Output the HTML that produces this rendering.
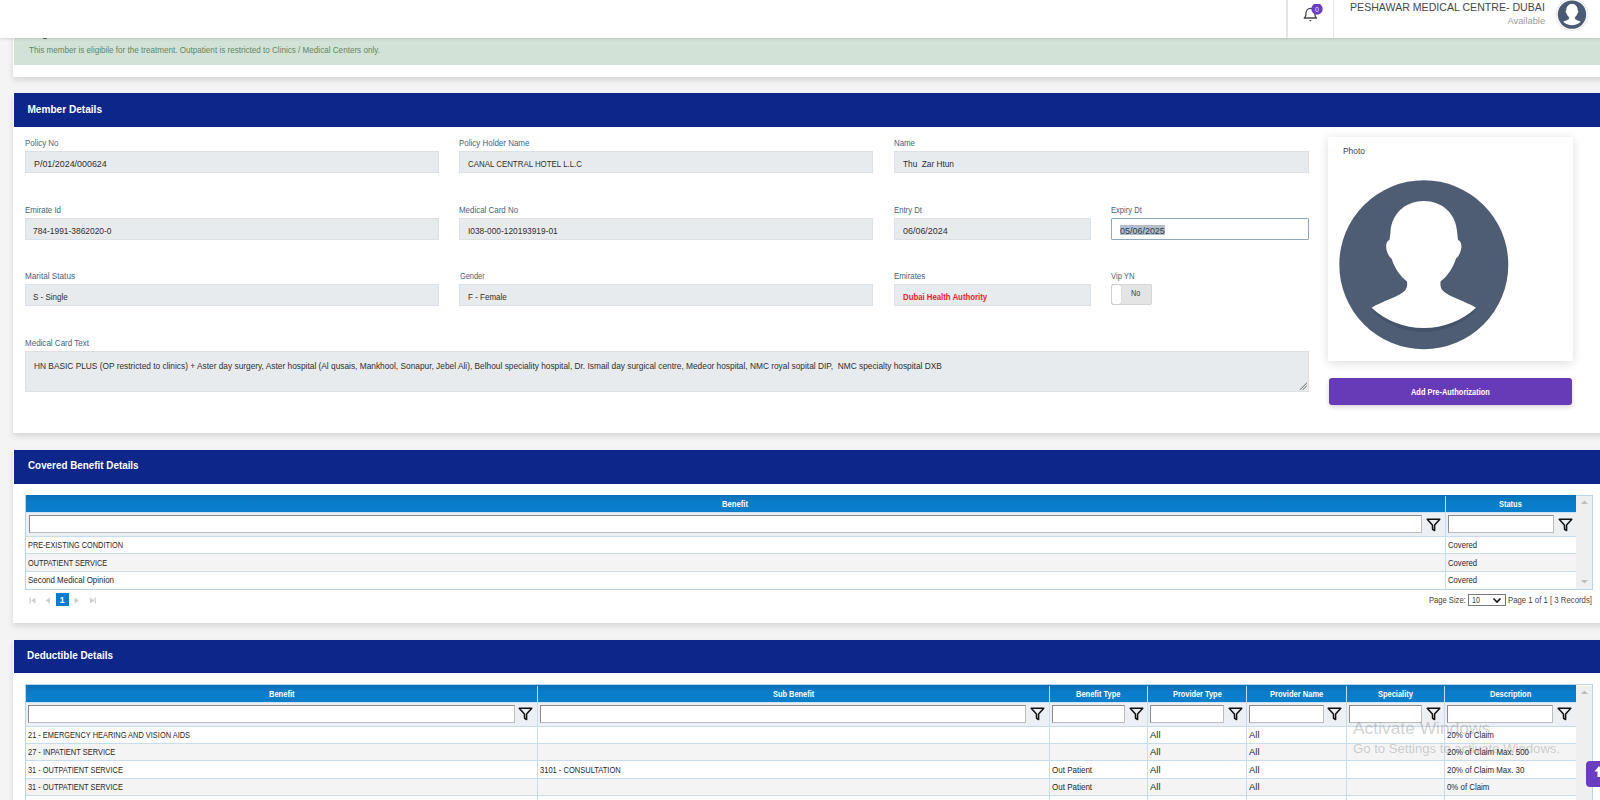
<!DOCTYPE html>
<html><head><meta charset="utf-8">
<style>
*{box-sizing:border-box;margin:0;padding:0}
html,body{width:1600px;height:800px;overflow:hidden}
body{position:relative;background:#f4f4f5;font-family:"Liberation Sans",sans-serif;color:#333}
.a{position:absolute}
.t{position:absolute;white-space:nowrap;line-height:1;transform-origin:0 0}
.card{position:absolute;left:13px;width:1600px;background:#fff;box-shadow:0 3px 6px rgba(0,0,0,0.13)}
.bh{position:absolute;left:14px;width:1600px;background:#0d2689}
.inp{position:absolute;background:#e8ebee;border:1px solid #dde0e4}
.grid{position:absolute;left:25px;width:1568px;border:1px solid #b9d3ea;background:#fff}
.gh{position:absolute;background:linear-gradient(#0a70b8,#0a7cc8 40%,#0a80cd)}
.fr{position:absolute;background:#eceff3}
.fin{position:absolute;background:#fff;border:1px solid #8a8a8a;border-bottom-color:#bdbdbd;border-right-color:#bdbdbd}
.vl{position:absolute;width:1px;background:#c6dcf0}
.hl{position:absolute;height:1px;background:#c6dcf0}
.stripe{position:absolute;background:#f4f4f4}
</style></head><body>

<div class="card" style="top:0;height:76.5px"></div>
<div class="a" style="left:14px;top:0;width:1600px;height:65px;background:#d3e2d6"></div>
<div class="a" style="left:42.5px;top:37.5px;width:4.5px;height:1.5px;background:#5a665c;border-radius:1px"></div>
<div class="a" style="left:0;top:0;width:1600px;height:38px;background:#fff;box-shadow:0 1px 3px rgba(0,0,0,0.12)"></div>
<div class="a" style="left:1286px;top:0;width:1.5px;height:38px;background:#e6e6e6"></div>
<div class="a" style="left:1333px;top:0;width:1px;height:38px;background:#e6e6e6"></div>
<svg class="a" style="left:1300px;top:4px" width="24" height="22" viewBox="0 0 24 22">
  <path d="M4.2 14 C5.4 13.2 5.9 12.2 5.9 10.4 C5.9 7 7.6 4.3 10.4 4.3 C13.2 4.3 14.9 7 14.9 10.4 C14.9 12.2 15.4 13.2 16.6 14 Z" fill="none" stroke="#474747" stroke-width="1.3" stroke-linejoin="round"/>
  <path d="M8.9 16.1 L11.9 16.1 L10.4 17.6 Z" fill="#4a4a4a"/>
  <circle cx="17" cy="5" r="5.7" fill="#6a3ec0"/>
  <text x="17" y="7.5" font-size="7" fill="#e8e0ff" text-anchor="middle" font-family="Liberation Sans">0</text>
</svg>
<svg class="a" style="left:1555px;top:-2px" width="34" height="34" viewBox="0 0 34 34">
  <circle cx="17" cy="16.6" r="16" fill="#fff" stroke="#e4e6ea" stroke-width="1"/>
  <circle cx="17" cy="16.6" r="14.2" fill="#4b5b76"/>
  <g transform="translate(17 16.6) scale(0.168) translate(-93.8 -94.7)"><path d="M93.8 30.9 C76 30.9 61.5 43 60.5 62 C60 66 59.8 68.5 59.5 70 C56.5 71 55.5 75 56.5 79.5 C57.5 84 59.5 87 61.5 88.5 C64.5 98 70 106 77 111.5 C77.5 115 77 118 75 120.5 C69 127 52 131 41.6 137.8 C56 151 74 158 93.8 158 C113.6 158 131.6 151 146 137.8 C135.6 131 118.6 127 112.6 120.5 C110.6 118 110.1 115 110.6 111.5 C117.6 106 123 98 126 88.5 C128 87 130 84 131 79.5 C132 75 131 71 128 70 C127.8 68.5 127.6 66 127.1 62 C126.1 43 111.6 30.9 93.8 30.9 Z" fill="#fff"/></g>
</svg>
<div class="card" style="top:93px;height:340px"></div>
<div class="bh" style="top:93px;height:33.6px"></div>
<div class="inp" style="left:25px;top:151px;width:414px;height:22px"></div>
<div class="inp" style="left:459px;top:151px;width:414px;height:22px"></div>
<div class="inp" style="left:25px;top:218px;width:414px;height:22px"></div>
<div class="inp" style="left:459px;top:218px;width:414px;height:22px"></div>
<div class="inp" style="left:25px;top:284px;width:414px;height:22px"></div>
<div class="inp" style="left:459px;top:284px;width:414px;height:22px"></div>
<div class="inp" style="left:894px;top:151px;width:414.5px;height:22px"></div>
<div class="inp" style="left:894px;top:218px;width:197px;height:22px"></div>
<div class="inp" style="left:894px;top:284px;width:197px;height:22px"></div>
<div class="a" style="left:1111px;top:218px;width:198px;height:22px;background:#fff;border:1.3px solid #8fa9c4;border-radius:1px"></div>
<div class="a" style="left:1120px;top:225px;width:45px;height:9.7px;background:#b3bfcb"></div>
<div class="a" style="left:1111px;top:284px;width:41px;height:20.5px;background:#e4e4e4;border:1px solid #d6d6d6;border-radius:2px"></div>
<div class="a" style="left:1111.5px;top:284.5px;width:9px;height:19.5px;background:#fff;border-radius:2px;box-shadow:0 0 1px rgba(0,0,0,0.3)"></div>
<div class="inp" style="left:25px;top:351px;width:1284px;height:40.6px"></div>
<svg class="a" style="left:1299px;top:382px" width="9" height="9" viewBox="0 0 9 9"><path d="M7.8 1 L0.8 7.8 M7.8 3.8 L3.6 7.8" stroke="#555" stroke-width="0.9"/></svg>
<div class="a" style="left:1328px;top:137px;width:245px;height:224px;background:#fff;box-shadow:0 2px 10px rgba(0,0,0,0.14)"></div>
<svg class="a" style="left:1330px;top:170px" width="190" height="190" viewBox="0 0 190 190">
  <circle cx="93.8" cy="94.7" r="84.5" fill="#4e5d74"/>
  <path d="M41.6 140.8 C56 154 74 162 93.8 162 C113.6 162 131.6 154 146 140.8 L146 137.8 C131.6 151 113.6 158 93.8 158 C74 158 56 151 41.6 137.8 Z" fill="#44526a"/>
  <path d="M93.8 30.9 C76 30.9 61.5 43 60.5 62 C60 66 59.8 68.5 59.5 70 C56.5 71 55.5 75 56.5 79.5 C57.5 84 59.5 87 61.5 88.5 C64.5 98 70 106 77 111.5 C77.5 115 77 118 75 120.5 C69 127 52 131 41.6 137.8 C56 151 74 158 93.8 158 C113.6 158 131.6 151 146 137.8 C135.6 131 118.6 127 112.6 120.5 C110.6 118 110.1 115 110.6 111.5 C117.6 106 123 98 126 88.5 C128 87 130 84 131 79.5 C132 75 131 71 128 70 C127.8 68.5 127.6 66 127.1 62 C126.1 43 111.6 30.9 93.8 30.9 Z" fill="#fff"/>
</svg>
<div class="a" style="left:1329px;top:378px;width:243px;height:27px;background:#673ab7;border-radius:3px;box-shadow:0 2px 5px rgba(0,0,0,0.18)"></div>
<div class="card" style="top:450px;height:173px"></div>
<div class="bh" style="top:450px;height:34px"></div>
<div class="grid" style="top:495px;height:94.5px"></div>
<div class="gh" style="left:26px;top:495.2px;width:1550px;height:16.8px"></div>
<div class="fr" style="left:26px;top:512px;width:1550px;height:24px;border-top:1px solid #cde2f4"></div>
<div class="fin" style="left:29px;top:515.3px;width:1392.5px;height:18px"></div>
<div class="fin" style="left:1448px;top:515.3px;width:105.5px;height:18px"></div>
<svg class="a" style="left:1426.0px;top:517.5px" width="15" height="14" viewBox="0 0 15 14"><path d="M1.2 1.2 L13.8 1.2 L8.6 7 L8.6 12.6 L6.6 11.4 L6.4 7 Z" fill="none" stroke="#111" stroke-width="1.5" stroke-linejoin="round"/></svg>
<svg class="a" style="left:1557.5px;top:517.5px" width="15" height="14" viewBox="0 0 15 14"><path d="M1.2 1.2 L13.8 1.2 L8.6 7 L8.6 12.6 L6.6 11.4 L6.4 7 Z" fill="none" stroke="#111" stroke-width="1.5" stroke-linejoin="round"/></svg>
<div class="stripe" style="left:26px;top:554px;width:1550px;height:17px"></div>
<div class="hl" style="left:26px;top:535.6px;width:1550px"></div>
<div class="hl" style="left:26px;top:553.4px;width:1550px"></div>
<div class="hl" style="left:26px;top:570.8px;width:1550px"></div>
<div class="vl" style="left:1444.5px;top:496px;height:93px"></div>
<div class="a" style="left:1576px;top:496px;width:16px;height:93px;background:#efefef"></div>
<svg class="a" style="left:1580px;top:499px" width="9" height="6" viewBox="0 0 9 6"><path d="M1 5 L4.5 1.5 L8 5 Z" fill="#bdbdbd"/></svg>
<svg class="a" style="left:1580px;top:579px" width="9" height="6" viewBox="0 0 9 6"><path d="M1 1 L4.5 4.5 L8 1 Z" fill="#bdbdbd"/></svg>
<svg class="a" style="left:28px;top:596px" width="70" height="9" viewBox="0 0 70 9"><rect x="1.5" y="1.5" width="1.3" height="6" fill="#cfcfcf"/><path d="M7.5 1.5 L3.2 4.5 L7.5 7.5 Z" fill="#cfcfcf"/><path d="M22 1.5 L17.5 4.5 L22 7.5 Z" fill="#cfcfcf"/><path d="M46.5 1.5 L51 4.5 L46.5 7.5 Z" fill="#cfcfcf"/><path d="M62 1.5 L66.3 4.5 L62 7.5 Z" fill="#cfcfcf"/><rect x="66.5" y="1.5" width="1.3" height="6" fill="#cfcfcf"/></svg>
<div class="a" style="left:55.7px;top:593px;width:13px;height:13px;background:#0b7bd0"></div>
<div class="a" style="left:1468px;top:594px;width:37.5px;height:11.5px;border:1px solid #777;background:#fff"></div>
<svg class="a" style="left:1492px;top:596.5px" width="10" height="7" viewBox="0 0 10 7"><path d="M1.5 1.5 L5 5 L8.5 1.5" fill="none" stroke="#111" stroke-width="1.6"/></svg>
<div class="card" style="top:640px;height:200px"></div>
<div class="bh" style="top:640px;height:33px"></div>
<div class="grid" style="top:683.8px;height:200px"></div>
<div class="gh" style="left:26px;top:684.5px;width:1550px;height:17.3px"></div>
<div class="fr" style="left:26px;top:701.8px;width:1550px;height:24px;border-top:1px solid #cde2f4"></div>
<div class="stripe" style="left:26px;top:743.1px;width:1550px;height:17.5px"></div>
<div class="stripe" style="left:26px;top:778.1px;width:1550px;height:17.5px"></div>
<div class="vl" style="left:536.9px;top:686px;height:114px"></div>
<div class="vl" style="left:1048.5px;top:686px;height:114px"></div>
<div class="vl" style="left:1147.0px;top:686px;height:114px"></div>
<div class="vl" style="left:1246.0px;top:686px;height:114px"></div>
<div class="vl" style="left:1345.5px;top:686px;height:114px"></div>
<div class="vl" style="left:1444.2px;top:686px;height:114px"></div>
<div class="fin" style="left:28.0px;top:705.3px;width:486.9px;height:18px"></div>
<svg class="a" style="left:518.4px;top:706.5px" width="15" height="14" viewBox="0 0 15 14"><path d="M1.2 1.2 L13.8 1.2 L8.6 7 L8.6 12.6 L6.6 11.4 L6.4 7 Z" fill="none" stroke="#111" stroke-width="1.5" stroke-linejoin="round"/></svg>
<div class="fin" style="left:539.9px;top:705.3px;width:486.6px;height:18px"></div>
<svg class="a" style="left:1030.0px;top:706.5px" width="15" height="14" viewBox="0 0 15 14"><path d="M1.2 1.2 L13.8 1.2 L8.6 7 L8.6 12.6 L6.6 11.4 L6.4 7 Z" fill="none" stroke="#111" stroke-width="1.5" stroke-linejoin="round"/></svg>
<div class="fin" style="left:1051.5px;top:705.3px;width:73.5px;height:18px"></div>
<svg class="a" style="left:1128.5px;top:706.5px" width="15" height="14" viewBox="0 0 15 14"><path d="M1.2 1.2 L13.8 1.2 L8.6 7 L8.6 12.6 L6.6 11.4 L6.4 7 Z" fill="none" stroke="#111" stroke-width="1.5" stroke-linejoin="round"/></svg>
<div class="fin" style="left:1150.0px;top:705.3px;width:74.0px;height:18px"></div>
<svg class="a" style="left:1227.5px;top:706.5px" width="15" height="14" viewBox="0 0 15 14"><path d="M1.2 1.2 L13.8 1.2 L8.6 7 L8.6 12.6 L6.6 11.4 L6.4 7 Z" fill="none" stroke="#111" stroke-width="1.5" stroke-linejoin="round"/></svg>
<div class="fin" style="left:1249.0px;top:705.3px;width:74.5px;height:18px"></div>
<svg class="a" style="left:1327.0px;top:706.5px" width="15" height="14" viewBox="0 0 15 14"><path d="M1.2 1.2 L13.8 1.2 L8.6 7 L8.6 12.6 L6.6 11.4 L6.4 7 Z" fill="none" stroke="#111" stroke-width="1.5" stroke-linejoin="round"/></svg>
<div class="fin" style="left:1348.5px;top:705.3px;width:73.7px;height:18px"></div>
<svg class="a" style="left:1425.7px;top:706.5px" width="15" height="14" viewBox="0 0 15 14"><path d="M1.2 1.2 L13.8 1.2 L8.6 7 L8.6 12.6 L6.6 11.4 L6.4 7 Z" fill="none" stroke="#111" stroke-width="1.5" stroke-linejoin="round"/></svg>
<div class="fin" style="left:1447.2px;top:705.3px;width:106.3px;height:18px"></div>
<svg class="a" style="left:1557.0px;top:706.5px" width="15" height="14" viewBox="0 0 15 14"><path d="M1.2 1.2 L13.8 1.2 L8.6 7 L8.6 12.6 L6.6 11.4 L6.4 7 Z" fill="none" stroke="#111" stroke-width="1.5" stroke-linejoin="round"/></svg>
<div class="hl" style="left:26px;top:725.5px;width:1550px"></div>
<div class="hl" style="left:26px;top:742.6px;width:1550px"></div>
<div class="hl" style="left:26px;top:760.1px;width:1550px"></div>
<div class="hl" style="left:26px;top:777.6px;width:1550px"></div>
<div class="hl" style="left:26px;top:795.1px;width:1550px"></div>
<div class="a" style="left:1576px;top:686px;width:16px;height:114px;background:#efefef"></div>
<svg class="a" style="left:1580px;top:689px" width="9" height="6" viewBox="0 0 9 6"><path d="M1 5 L4.5 1.5 L8 5 Z" fill="#bdbdbd"/></svg>
<div class="t" style="left:1350.00px;top:2.00px;font-size:10.6px;color:#474747">PESHAWAR MEDICAL CENTRE- DUBAI</div>
<div class="t" style="left:1507.50px;top:17.00px;font-size:9.3px;color:#9a9a9a">Available</div>
<div class="t" style="left:29.00px;top:46.00px;font-size:9.3px;color:#5f8667;transform:scaleX(0.871)">This member is eligibile for the treatment. Outpatient is restricted to Clinics / Medical Centers only.</div>
<div class="t" style="left:27.40px;top:105.00px;font-size:10.1px;color:#fff;font-weight:bold">Member Details</div>
<div class="t" style="left:27.50px;top:461.00px;font-size:10.1px;color:#fff;font-weight:bold;transform:scaleX(0.976)">Covered Benefit Details</div>
<div class="t" style="left:27.40px;top:651.00px;font-size:10.1px;color:#fff;font-weight:bold;transform:scaleX(0.982)">Deductible Details</div>
<div class="t" style="left:25.00px;top:139.00px;font-size:8.9px;color:#3f6480;transform:scaleX(0.891)">Policy No</div>
<div class="t" style="left:459.30px;top:139.00px;font-size:8.9px;color:#3f6480;transform:scaleX(0.898)">Policy Holder Name</div>
<div class="t" style="left:894.00px;top:139.00px;font-size:8.9px;color:#3f6480;transform:scaleX(0.887)">Name</div>
<div class="t" style="left:25.00px;top:206.00px;font-size:8.9px;color:#3f6480;transform:scaleX(0.890)">Emirate Id</div>
<div class="t" style="left:459.30px;top:206.00px;font-size:8.9px;color:#3f6480;transform:scaleX(0.894)">Medical Card No</div>
<div class="t" style="left:894.00px;top:206.00px;font-size:8.9px;color:#3f6480;transform:scaleX(0.870)">Entry Dt</div>
<div class="t" style="left:1111.40px;top:206.00px;font-size:8.9px;color:#3f6480;transform:scaleX(0.856)">Expiry Dt</div>
<div class="t" style="left:25.00px;top:272.00px;font-size:8.9px;color:#3f6480;transform:scaleX(0.922)">Marital Status</div>
<div class="t" style="left:459.70px;top:272.00px;font-size:8.9px;color:#3f6480;transform:scaleX(0.834)">Gender</div>
<div class="t" style="left:894.00px;top:272.00px;font-size:8.9px;color:#3f6480;transform:scaleX(0.892)">Emirates</div>
<div class="t" style="left:1111.40px;top:272.00px;font-size:8.9px;color:#3f6480;transform:scaleX(0.859)">Vip YN</div>
<div class="t" style="left:24.90px;top:339.00px;font-size:8.9px;color:#3f6480;transform:scaleX(0.903)">Medical Card Text</div>
<div class="t" style="left:33.60px;top:160.00px;font-size:8.6px;color:#2e2e2e;transform:scaleX(1.036)">P/01/2024/000624</div>
<div class="t" style="left:468.10px;top:160.00px;font-size:8.6px;color:#2e2e2e;transform:scaleX(0.918)">CANAL CENTRAL HOTEL L.L.C</div>
<div class="t" style="left:903.10px;top:160.00px;font-size:8.6px;color:#2e2e2e;transform:scaleX(0.960)">Thu  Zar Htun</div>
<div class="t" style="left:33.40px;top:227.00px;font-size:8.6px;color:#2e2e2e;transform:scaleX(0.978)">784-1991-3862020-0</div>
<div class="t" style="left:468.00px;top:227.00px;font-size:8.6px;color:#2e2e2e;transform:scaleX(0.973)">I038-000-120193919-01</div>
<div class="t" style="left:903.00px;top:227.00px;font-size:8.6px;color:#2e2e2e;transform:scaleX(1.039)">06/06/2024</div>
<div class="t" style="left:1120.00px;top:227.00px;font-size:8.6px;color:#2d3a46;transform:scaleX(1.042)">05/06/2025</div>
<div class="t" style="left:33.40px;top:293.00px;font-size:8.6px;color:#2e2e2e;transform:scaleX(0.931)">S - Single</div>
<div class="t" style="left:468.10px;top:293.00px;font-size:8.6px;color:#2e2e2e;transform:scaleX(0.934)">F - Female</div>
<div class="t" style="left:902.50px;top:293.00px;font-size:8.3px;color:#e8232a;font-weight:bold;transform:scaleX(0.939)">Dubai Health Authority</div>
<div class="t" style="left:1131.00px;top:289.00px;font-size:8.6px;color:#3a3a3a;transform:scaleX(0.837)">No</div>
<div class="t" style="left:33.60px;top:362.00px;font-size:8.6px;color:#2e2e2e;transform:scaleX(0.969)">HN BASIC PLUS (OP restricted to clinics) + Aster day surgery, Aster hospital (Al qusais, Mankhool, Sonapur, Jebel Ali), Belhoul speciality hospital, Dr. Ismail day surgical centre, Medeor hospital, NMC royal sopital DIP,  NMC specialty hospital DXB</div>
<div class="t" style="left:1342.80px;top:147.00px;font-size:8.3px;color:#3f3f3f;transform:scaleX(1.015)">Photo</div>
<div class="t" style="left:1411.40px;top:388.00px;font-size:8.8px;color:#fff;font-weight:bold;transform:scaleX(0.844)">Add Pre-Authorization</div>
<div class="t" style="left:722.30px;top:500.00px;font-size:8.6px;color:#fff;font-weight:bold;transform:scaleX(0.893)">Benefit</div>
<div class="t" style="left:1499.00px;top:500.00px;font-size:8.6px;color:#fff;font-weight:bold;transform:scaleX(0.868)">Status</div>
<div class="t" style="left:28.20px;top:541.00px;font-size:8.8px;color:#262626;transform:scaleX(0.834)">PRE-EXISTING CONDITION</div>
<div class="t" style="left:1447.90px;top:541.00px;font-size:8.8px;color:#262626;transform:scaleX(0.875)">Covered</div>
<div class="t" style="left:28.20px;top:559.00px;font-size:8.8px;color:#262626;transform:scaleX(0.831)">OUTPATIENT SERVICE</div>
<div class="t" style="left:1447.90px;top:559.00px;font-size:8.8px;color:#262626;transform:scaleX(0.875)">Covered</div>
<div class="t" style="left:28.20px;top:576.00px;font-size:8.8px;color:#262626;transform:scaleX(0.902)">Second Medical Opinion</div>
<div class="t" style="left:1447.90px;top:576.00px;font-size:8.8px;color:#262626;transform:scaleX(0.875)">Covered</div>
<div class="t" style="left:59.81px;top:596.00px;font-size:8.6px;color:#fff;font-weight:bold">1</div>
<div class="t" style="left:1428.50px;top:596.00px;font-size:8.8px;color:#444;transform:scaleX(0.863)">Page Size:</div>
<div class="t" style="left:1471.70px;top:596.00px;font-size:8.8px;color:#444;transform:scaleX(0.818)">10</div>
<div class="t" style="left:1508.00px;top:596.00px;font-size:8.8px;color:#444;transform:scaleX(0.885)">Page 1 of 1 [ 3 Records]</div>
<div class="t" style="left:268.70px;top:690.00px;font-size:8.6px;color:#fff;font-weight:bold;transform:scaleX(0.876)">Benefit</div>
<div class="t" style="left:772.60px;top:690.00px;font-size:8.6px;color:#fff;font-weight:bold;transform:scaleX(0.863)">Sub Benefit</div>
<div class="t" style="left:1076.00px;top:690.00px;font-size:8.6px;color:#fff;font-weight:bold;transform:scaleX(0.874)">Benefit Type</div>
<div class="t" style="left:1172.62px;top:690.00px;font-size:8.6px;color:#fff;font-weight:bold;transform:scaleX(0.860)">Provider Type</div>
<div class="t" style="left:1269.60px;top:690.00px;font-size:8.6px;color:#fff;font-weight:bold;transform:scaleX(0.879)">Provider Name</div>
<div class="t" style="left:1377.90px;top:690.00px;font-size:8.6px;color:#fff;font-weight:bold;transform:scaleX(0.870)">Speciality</div>
<div class="t" style="left:1489.75px;top:690.00px;font-size:8.6px;color:#fff;font-weight:bold;transform:scaleX(0.872)">Description</div>
<div class="t" style="left:28.20px;top:731.00px;font-size:8.8px;color:#262626;transform:scaleX(0.844)">21 - EMERGENCY HEARING AND VISION AIDS</div>
<div class="t" style="left:1150.20px;top:731.00px;font-size:8.8px;color:#262626;transform:scaleX(1.074)">All</div>
<div class="t" style="left:1249.20px;top:731.00px;font-size:8.8px;color:#262626;transform:scaleX(1.074)">All</div>
<div class="t" style="left:1447.40px;top:731.00px;font-size:8.8px;color:#262626;transform:scaleX(0.895)">20% of Claim</div>
<div class="t" style="left:28.20px;top:748.00px;font-size:8.8px;color:#262626;transform:scaleX(0.848)">27 - INPATIENT SERVICE</div>
<div class="t" style="left:1150.20px;top:748.00px;font-size:8.8px;color:#262626;transform:scaleX(1.074)">All</div>
<div class="t" style="left:1249.20px;top:748.00px;font-size:8.8px;color:#262626;transform:scaleX(1.074)">All</div>
<div class="t" style="left:1447.40px;top:748.00px;font-size:8.8px;color:#262626;transform:scaleX(0.902)">20% of Claim Max. 500</div>
<div class="t" style="left:28.20px;top:766.00px;font-size:8.8px;color:#262626;transform:scaleX(0.841)">31 - OUTPATIENT SERVICE</div>
<div class="t" style="left:540.10px;top:766.00px;font-size:8.8px;color:#262626;transform:scaleX(0.856)">3101 - CONSULTATION</div>
<div class="t" style="left:1051.70px;top:766.00px;font-size:8.8px;color:#262626;transform:scaleX(0.911)">Out Patient</div>
<div class="t" style="left:1150.20px;top:766.00px;font-size:8.8px;color:#262626;transform:scaleX(1.074)">All</div>
<div class="t" style="left:1249.20px;top:766.00px;font-size:8.8px;color:#262626;transform:scaleX(1.074)">All</div>
<div class="t" style="left:1447.40px;top:766.00px;font-size:8.8px;color:#262626;transform:scaleX(0.899)">20% of Claim Max. 30</div>
<div class="t" style="left:28.20px;top:783.00px;font-size:8.8px;color:#262626;transform:scaleX(0.841)">31 - OUTPATIENT SERVICE</div>
<div class="t" style="left:1051.70px;top:783.00px;font-size:8.8px;color:#262626;transform:scaleX(0.911)">Out Patient</div>
<div class="t" style="left:1150.20px;top:783.00px;font-size:8.8px;color:#262626;transform:scaleX(1.074)">All</div>
<div class="t" style="left:1249.20px;top:783.00px;font-size:8.8px;color:#262626;transform:scaleX(1.074)">All</div>
<div class="t" style="left:1447.40px;top:783.00px;font-size:8.8px;color:#262626;transform:scaleX(0.892)">0% of Claim</div>
<div class="t" style="left:1353.00px;top:720.00px;font-size:16.5px;color:rgba(125,125,125,0.36);transform:scaleX(1.054)">Activate Windows</div>
<div class="t" style="left:1353.00px;top:743.00px;font-size:12.8px;color:rgba(125,125,125,0.36);transform:scaleX(1.025)">Go to Settings to activate Windows.</div>
<div class="a" style="left:1586px;top:760.5px;width:30px;height:26px;background:#6a3cc0;border-radius:4px"></div>
<svg class="a" style="left:1594px;top:765px" width="10" height="16" viewBox="0 0 10 16"><path d="M5 1 L9.5 6.5 L6.5 6.5 L6.5 12 L3.5 12 L3.5 6.5 L0.5 6.5 Z" fill="#fff"/></svg>
</body></html>
